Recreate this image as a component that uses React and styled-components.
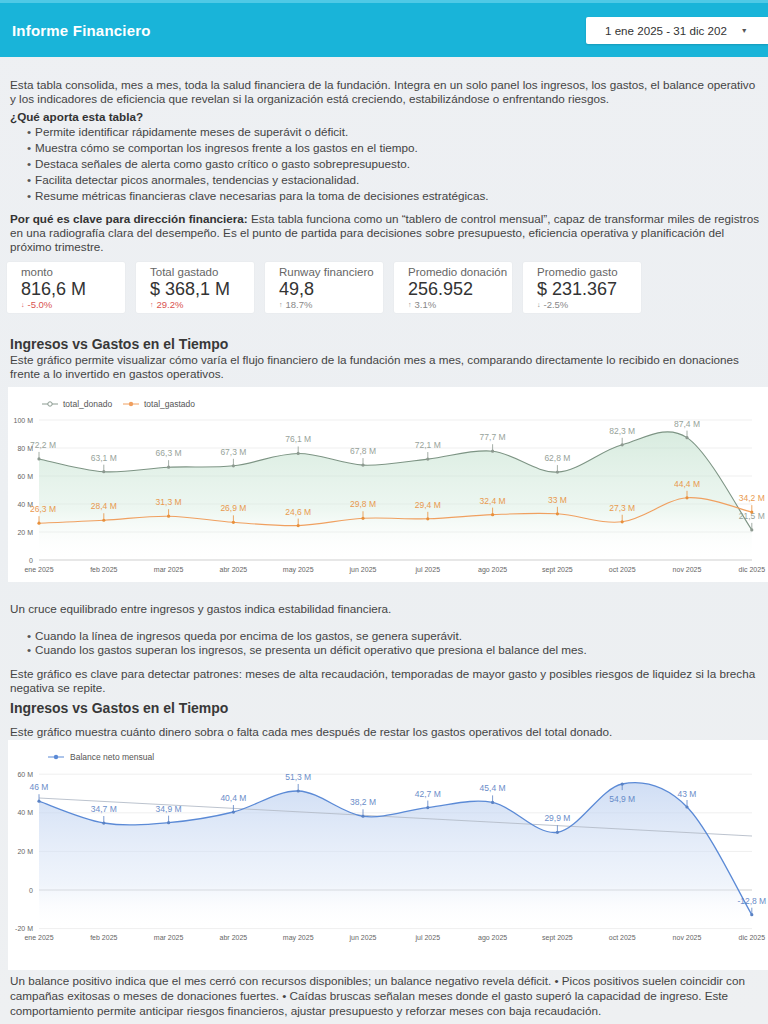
import React from "react";
import styled, { createGlobalStyle } from "styled-components";

const Global = createGlobalStyle`
  * { box-sizing: border-box; }
  html, body { margin: 0; padding: 0; }
  body {
    font-family: "Liberation Sans", Arial, sans-serif;
    background: linear-gradient(180deg, #eef0f3 0%, #eceff2 50%, #eef0f2 100%);
    color: #3f3f3f;
    width: 768px;
    overflow-x: hidden;
  }
`;

const Page = styled.div`
  width: 768px;
  min-height: 1024px;
  overflow: hidden;
`;

const Header = styled.header`
  height: 57px;
  background: #19b4d9;
  border-top: 3px solid #4fc9e6;
  display: flex;
  align-items: center;
  justify-content: space-between;
  padding-left: 12px;
`;

const Title = styled.h1`
  margin: 0;
  font-size: 15px;
  font-weight: 700;
  color: #fff;
  letter-spacing: 0.2px;
`;

const DateBox = styled.div`
  width: 182px;
  height: 27px;
  background: #fff;
  border-radius: 2px 0 0 2px;
  display: flex;
  align-items: center;
  padding-left: 19px;
  gap: 14px;
  font-size: 11.6px;
  color: #333;
  box-shadow: 0 1px 2px rgba(0, 0, 0, 0.15);
`;

const Caret = styled.span`
  font-size: 7px;
  color: #555;
`;

const Main = styled.main`
  padding: 21px 10px 0 10px;
`;

const P = styled.p`
  margin: ${(p) => p.$mt || 0}px 0 0 0;
  font-size: 11.7px;
  line-height: ${(p) => p.$lh || 14}px;
  color: #444;
  white-space: nowrap;
`;

const Strong = styled.strong`
  font-weight: 700;
  color: #333;
`;

const SubHead = styled.h4`
  margin: 4px 0 0 0;
  font-size: 11.7px;
  line-height: 14px;
  font-weight: 700;
  color: #333;
`;

const List = styled.ul`
  margin: ${(p) => p.$mt || 0}px 0 0 0;
  padding: 0 0 0 17px;
  list-style: none;
`;

const Item = styled.li`
  font-size: 11.7px;
  line-height: ${(p) => p.$lh || 16}px;
  color: #444;
  white-space: nowrap;
  &::before {
    content: "•";
    margin-right: 4px;
    color: #555;
  }
`;

const Cards = styled.div`
  display: flex;
  gap: 11px;
  margin: 8px 0 0 -3px;
`;

const Card = styled.div`
  width: 118px;
  height: 51px;
  background: #fff;
  border-radius: 2px;
  box-shadow: 0 0 2px rgba(0, 0, 0, 0.06);
  padding: 4px 0 0 14px;
  display: flex;
  flex-direction: column;
`;

const CardLabel = styled.div`
  font-size: 11.5px;
  line-height: 13px;
  color: #666;
  white-space: nowrap;
`;

const CardValue = styled.div`
  font-size: 18px;
  line-height: 20px;
  color: #333;
  white-space: nowrap;
`;

const CardDelta = styled.div`
  font-size: 9.5px;
  line-height: 12px;
  color: ${(p) => (p.$bad ? "#d9534f" : "#888")};
  display: flex;
  align-items: center;
  gap: 3px;
`;

const Arrow = styled.span`
  font-size: 7px;
`;

const SectionTitle = styled.h2`
  margin: ${(p) => p.$mt || 0}px 0 0 0;
  font-size: 14px;
  line-height: 18px;
  font-weight: 700;
  color: #383838;
`;

const Panel = styled.div`
  margin: ${(p) => p.$mt || 0}px -10px 0 -2px;
  background: #fff;
  height: ${(p) => p.$h}px;
`;

const Svg = styled.svg`
  display: block;
  width: 760px;
  font-family: "Liberation Sans", Arial, sans-serif;
`;

const X0 = 31;
const STEP = 64.8;
const months = ["ene", "feb", "mar", "abr", "may", "jun", "jul", "ago", "sept", "oct", "nov", "dic"];

function smooth(pts) {
  let d = `M${pts[0][0]},${pts[0][1]}`;
  for (let i = 0; i < pts.length - 1; i++) {
    const p0 = pts[i - 1] || pts[i];
    const p1 = pts[i];
    const p2 = pts[i + 1];
    const p3 = pts[i + 2] || p2;
    const c1x = p1[0] + (p2[0] - p0[0]) / 6;
    const c1y = p1[1] + (p2[1] - p0[1]) / 6;
    const c2x = p2[0] - (p3[0] - p1[0]) / 6;
    const c2y = p2[1] - (p3[1] - p1[1]) / 6;
    d += ` C${c1x.toFixed(1)},${c1y.toFixed(1)} ${c2x.toFixed(1)},${c2y.toFixed(1)} ${p2[0].toFixed(1)},${p2[1].toFixed(1)}`;
  }
  return d;
}

const fmt = (v) => `${String(v).replace(".", ",")} M`;

function Axes({ ticks, y, xLabelY }) {
  return (
    <g>
      {ticks.map((t) => (
        <g key={t}>
          <line x1={X0} x2={744} y1={y(t)} y2={y(t)} stroke={t === 0 ? "#cfcfcf" : "#efefef"} strokeWidth="1" />
          <text x={25} y={y(t) + 2.5} fontSize="7" fill="#666" textAnchor="end">
            {t === 0 ? "0" : `${t} M`}
          </text>
        </g>
      ))}
      {months.map((m, i) => (
        <text key={m} x={X0 + i * STEP} y={xLabelY} fontSize="7" fill="#666" textAnchor="middle">
          {`${m} 2025`}
        </text>
      ))}
    </g>
  );
}

function Labels({ data, y, color, offsets = {}, shifts = {} }) {
  return data.map((v, i) => {
    const x = X0 + i * STEP;
    const py = y(v);
    const off = offsets[i] ?? -13;
    const ly = py + off;
    const sx = shifts[i] || 0;
    return (
      <g key={i}>
        <line x1={x} x2={x} y1={py} y2={off < 0 ? py - 7 : py + 6} stroke={color} strokeWidth="0.8" />
        <circle cx={x} cy={py} r="1.6" fill={color} />
        <text x={x + sx} y={off < 0 ? ly + 2 : ly + 6} fontSize="8.5" fill={color} textAnchor="middle" opacity="0.9">
          {fmt(v)}
        </text>
      </g>
    );
  });
}

const donado = [72.2, 63.1, 66.3, 67.3, 76.1, 67.8, 72.1, 77.7, 62.8, 82.3, 87.4, 21.5];
const gastado = [26.3, 28.4, 31.3, 26.9, 24.6, 29.8, 29.4, 32.4, 33, 27.3, 44.4, 34.2];
const balance = [46, 34.7, 34.9, 40.4, 51.3, 38.2, 42.7, 45.4, 29.9, 54.9, 43, -12.8];

function FlowChart() {
  const y = (v) => 173 - v * 1.4;
  const dPts = donado.map((v, i) => [X0 + i * STEP, y(v)]);
  const gPts = gastado.map((v, i) => [X0 + i * STEP, y(v)]);
  const dPath = smooth(dPts);
  const area = `${dPath} L744,${y(0)} L${X0},${y(0)} Z`;
  return (
    <Svg height="195" viewBox="0 0 760 195">
      <defs>
        <linearGradient id="gDon" x1="0" y1="0" x2="0" y2="1">
          <stop offset="0" stopColor="#b9dcc6" stopOpacity="0.55" />
          <stop offset="0.6" stopColor="#d6ecdf" stopOpacity="0.45" />
          <stop offset="1" stopColor="#ffffff" stopOpacity="0" />
        </linearGradient>
      </defs>
      <g fontSize="8.5" fill="#555">
        <line x1="34" x2="50" y1="17" y2="17" stroke="#8a9a90" strokeWidth="1" />
        <circle cx="42" cy="17" r="2.2" fill="#fff" stroke="#8a9a90" strokeWidth="1" />
        <text x="55" y="20">total_donado</text>
        <line x1="115" x2="131" y1="17" y2="17" stroke="#f0a060" strokeWidth="1" />
        <circle cx="123" cy="17" r="2.2" fill="#f0a060" />
        <text x="136" y="20">total_gastado</text>
      </g>
      <Axes ticks={[0, 20, 40, 60, 80, 100]} y={y} xLabelY={185} />
      <path d={area} fill="url(#gDon)" />
      <path d={dPath} fill="none" stroke="#7d9484" strokeWidth="1.1" />
      <path d={smooth(gPts)} fill="none" stroke="#f0a060" strokeWidth="1.1" />
      <Labels data={donado} y={y} color="#8d9990" shifts={{ 0: 4 }} />
      <Labels data={gastado} y={y} color="#e8903c" shifts={{ 0: 4 }} />
    </Svg>
  );
}

function BalanceChart() {
  const y = (v) => 150 - v * 1.93;
  const pts = balance.map((v, i) => [X0 + i * STEP, y(v)]);
  const path = smooth(pts);
  const area = `${path} L744,${y(-20)} L${X0},${y(-20)} Z`;
  return (
    <Svg height="230" viewBox="0 0 760 230">
      <defs>
        <linearGradient id="gBal" x1="0" y1="0" x2="0" y2="1">
          <stop offset="0" stopColor="#bcd0f0" stopOpacity="0.7" />
          <stop offset="0.7" stopColor="#dde7f7" stopOpacity="0.45" />
          <stop offset="1" stopColor="#ffffff" stopOpacity="0" />
        </linearGradient>
      </defs>
      <g fontSize="8.5" fill="#555">
        <line x1="40" x2="56" y1="17" y2="17" stroke="#5b8ad6" strokeWidth="1" />
        <circle cx="48" cy="17" r="2.2" fill="#5b8ad6" />
        <text x="62" y="20">Balance neto mensual</text>
      </g>
      <Axes ticks={[60, 40, 20, 0, -20]} y={y} xLabelY={200} />
      <path d={area} fill="url(#gBal)" />
      <line x1={X0} y1={58} x2={744} y2={96} stroke="#b4bcc8" strokeWidth="0.9" />
      <path d={path} fill="none" stroke="#5b8ad6" strokeWidth="1.3" />
      <Labels data={balance} y={y} color="#5a82c4" offsets={{ 9: 12, 10: -12 }} />
    </Svg>
  );
}

const cards = [
  { label: "monto", value: "816,6 M", delta: "-5.0%", up: false, bad: true },
  { label: "Total gastado", value: "$ 368,1 M", delta: "29.2%", up: true, bad: true },
  { label: "Runway financiero", value: "49,8", delta: "18.7%", up: true },
  { label: "Promedio donación", value: "256.952", delta: "3.1%", up: true },
  { label: "Promedio gasto", value: "$ 231.367", delta: "-2.5%", up: false },
];

export default function App() {
  return (
    <Page>
      <Global />
      <Header>
        <Title>Informe Financiero</Title>
        <DateBox>
          <span>1 ene 2025 - 31 dic 202</span>
          <Caret>▼</Caret>
        </DateBox>
      </Header>
      <Main>
        <P>
          Esta tabla consolida, mes a mes, toda la salud financiera de la fundación. Integra en un solo panel los ingresos, los gastos, el balance operativo
          <br />y los indicadores de eficiencia que revelan si la organización está creciendo, estabilizándose o enfrentando riesgos.
        </P>
        <SubHead>¿Qué aporta esta tabla?</SubHead>
        <List>
          <Item>Permite identificar rápidamente meses de superávit o déficit.</Item>
          <Item>Muestra cómo se comportan los ingresos frente a los gastos en el tiempo.</Item>
          <Item>Destaca señales de alerta como gasto crítico o gasto sobrepresupuesto.</Item>
          <Item>Facilita detectar picos anormales, tendencias y estacionalidad.</Item>
          <Item>Resume métricas financieras clave necesarias para la toma de decisiones estratégicas.</Item>
        </List>
        <P $mt={8}>
          <Strong>Por qué es clave para dirección financiera:</Strong> Esta tabla funciona como un “tablero de control mensual”, capaz de transformar miles de registros
          <br />en una radiografía clara del desempeño. Es el punto de partida para decisiones sobre presupuesto, eficiencia operativa y planificación del
          <br />próximo trimestre.
        </P>
        <Cards>
          {cards.map((c) => (
            <Card key={c.label}>
              <CardLabel>{c.label}</CardLabel>
              <CardValue>{c.value}</CardValue>
              <CardDelta $bad={c.bad}>
                <Arrow>{c.up ? "↑" : "↓"}</Arrow>
                {c.delta}
              </CardDelta>
            </Card>
          ))}
        </Cards>
        <SectionTitle $mt={22}>Ingresos vs Gastos en el Tiempo</SectionTitle>
        <P>
          Este gráfico permite visualizar cómo varía el flujo financiero de la fundación mes a mes, comparando directamente lo recibido en donaciones
          <br />frente a lo invertido en gastos operativos.
        </P>
        <Panel $mt={6} $h={195}>
          <FlowChart />
        </Panel>
        <P $mt={20}>Un cruce equilibrado entre ingresos y gastos indica estabilidad financiera.</P>
        <List $mt={13}>
          <Item $lh={13.5}>Cuando la línea de ingresos queda por encima de los gastos, se genera superávit.</Item>
          <Item $lh={13.5}>Cuando los gastos superan los ingresos, se presenta un déficit operativo que presiona el balance del mes.</Item>
        </List>
        <P $mt={11}>
          Este gráfico es clave para detectar patrones: meses de alta recaudación, temporadas de mayor gasto y posibles riesgos de liquidez si la brecha
          <br />negativa se repite.
        </P>
        <SectionTitle $mt={4}>Ingresos vs Gastos en el Tiempo</SectionTitle>
        <P $mt={8}>Este gráfico muestra cuánto dinero sobra o falta cada mes después de restar los gastos operativos del total donado.</P>
        <Panel $mt={1} $h={230}>
          <BalanceChart />
        </Panel>
        <P $mt={3} $lh={15}>
          Un balance positivo indica que el mes cerró con recursos disponibles; un balance negativo revela déficit. • Picos positivos suelen coincidir con
          <br />campañas exitosas o meses de donaciones fuertes. • Caídas bruscas señalan meses donde el gasto superó la capacidad de ingreso. Este
          <br />comportamiento permite anticipar riesgos financieros, ajustar presupuesto y reforzar meses con baja recaudación.
        </P>
      </Main>
    </Page>
  );
}
